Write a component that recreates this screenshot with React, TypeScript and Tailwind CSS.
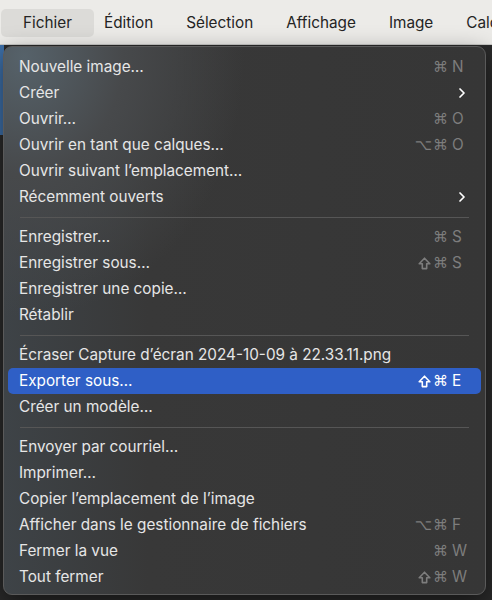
import { ChevronRight } from "lucide-react";

type Item =
	| { sep: true }
	| { label: string; mods?: string; k?: string; sub?: boolean; active?: boolean; shift?: boolean };

const items: Item[] = [
	{ label: "Nouvelle image…", mods: "⌘", k: "N" },
	{ label: "Créer", sub: true },
	{ label: "Ouvrir…", mods: "⌘", k: "O" },
	{ label: "Ouvrir en tant que calques…", mods: "⌥⌘", k: "O" },
	{ label: "Ouvrir suivant l’emplacement…" },
	{ label: "Récemment ouverts", sub: true },
	{ sep: true },
	{ label: "Enregistrer…", mods: "⌘", k: "S" },
	{ label: "Enregistrer sous…", shift: true, mods: "⌘", k: "S" },
	{ label: "Enregistrer une copie…" },
	{ label: "Rétablir" },
	{ sep: true },
	{ label: "Écraser Capture d’écran 2024-10-09 à 22.33.11.png" },
	{ label: "Exporter sous…", shift: true, mods: "⌘", k: "E", active: true },
	{ label: "Créer un modèle…" },
	{ sep: true },
	{ label: "Envoyer par courriel…" },
	{ label: "Imprimer…" },
	{ label: "Copier l’emplacement de l’image" },
	{ label: "Afficher dans le gestionnaire de fichiers", mods: "⌥⌘", k: "F" },
	{ label: "Fermer la vue", mods: "⌘", k: "W" },
	{ label: "Tout fermer", shift: true, mods: "⌘", k: "W" },
];

const menus = ["Édition", "Sélection", "Affichage", "Image", "Calques"];

// Shift key glyph (outlined up arrow)
function ShiftIcon() {
	return (
		<svg width="13" height="13" viewBox="0 0 13 13" className="mr-[2px]">
			<path
				d="M6.5 1.2 L11.8 6.8 H8.7 V11.6 H4.3 V6.8 H1.2 Z"
				fill="none"
				stroke="currentColor"
				strokeWidth="1.6"
				strokeLinejoin="round"
			/>
		</svg>
	);
}

export default function App() {
	return (
		<div className="w-[492px] h-[600px] overflow-hidden bg-[#2a2a2a] font-['Inter','DejaVu_Sans',sans-serif]">
			{/* --- Menu bar --- */}
			<div className="h-[45px] bg-[#ecebe8] flex items-center pl-[1px] pt-[2px] text-[15.3px] text-[#242424] border-b border-[#c9c9c6] whitespace-nowrap">
				<div className="h-[28px] w-[93px] rounded-[5px] bg-[#dcdbd8] flex items-center justify-center shrink-0">
					Fichier
				</div>
				<div className="flex items-center gap-[33px] pl-[10px]">
					{menus.map((m) => (
						<span key={m} className="shrink-0">
							{m}
						</span>
					))}
				</div>
			</div>

			{/* --- Dropdown --- */}
			<div className="relative">
				<div className="absolute left-0 top-0 h-[90px] w-[4px] bg-[#3d6fa8]" />
				<div className="absolute left-[3px] top-[1px] w-[483px] rounded-[9px] border border-[#5a5a5a] shadow-[0_8px_24px_rgba(0,0,0,0.5)] bg-[radial-gradient(ellipse_220px_260px_at_20px_10px,#56626a_0%,#47494b_45%,transparent_100%),linear-gradient(90deg,#3e4347_0%,#383838_30%,#363636_100%)] pt-[7px] pb-[4px] px-[4px] text-[15.3px]">
					{items.map((it, i) =>
						"sep" in it ? (
							<div key={i} className="h-[14px] flex items-center px-[12px]">
								<div className="h-px w-full bg-[#565656]" />
							</div>
						) : (
							<div
								key={i}
								className={`h-[26px] flex items-center pl-[11px] pr-[14px] rounded-[5px] ${
									it.active ? "bg-[#2f5fc6] text-white" : "text-[#e6e6e6]"
								}`}>
								<span className="grow whitespace-nowrap">{it.label}</span>
								{it.sub && <ChevronRight size={16} strokeWidth={2.6} className="text-white -mr-[3px]" />}
								{it.k && (
									<span
										className={`flex items-center font-['DejaVu_Sans','Inter',sans-serif] text-[15px] ${
											it.active ? "text-white" : "text-[#7d7d7d]"
										}`}>
										{it.shift && <ShiftIcon />}
										<span className="text-right tracking-[1px]">{it.mods}</span>
										<span className="w-[18px] pl-[3px] font-['Inter',sans-serif] text-[15.3px]">{it.k}</span>
									</span>
								)}
							</div>
						)
					)}
				</div>
			</div>
		</div>
	);
}
